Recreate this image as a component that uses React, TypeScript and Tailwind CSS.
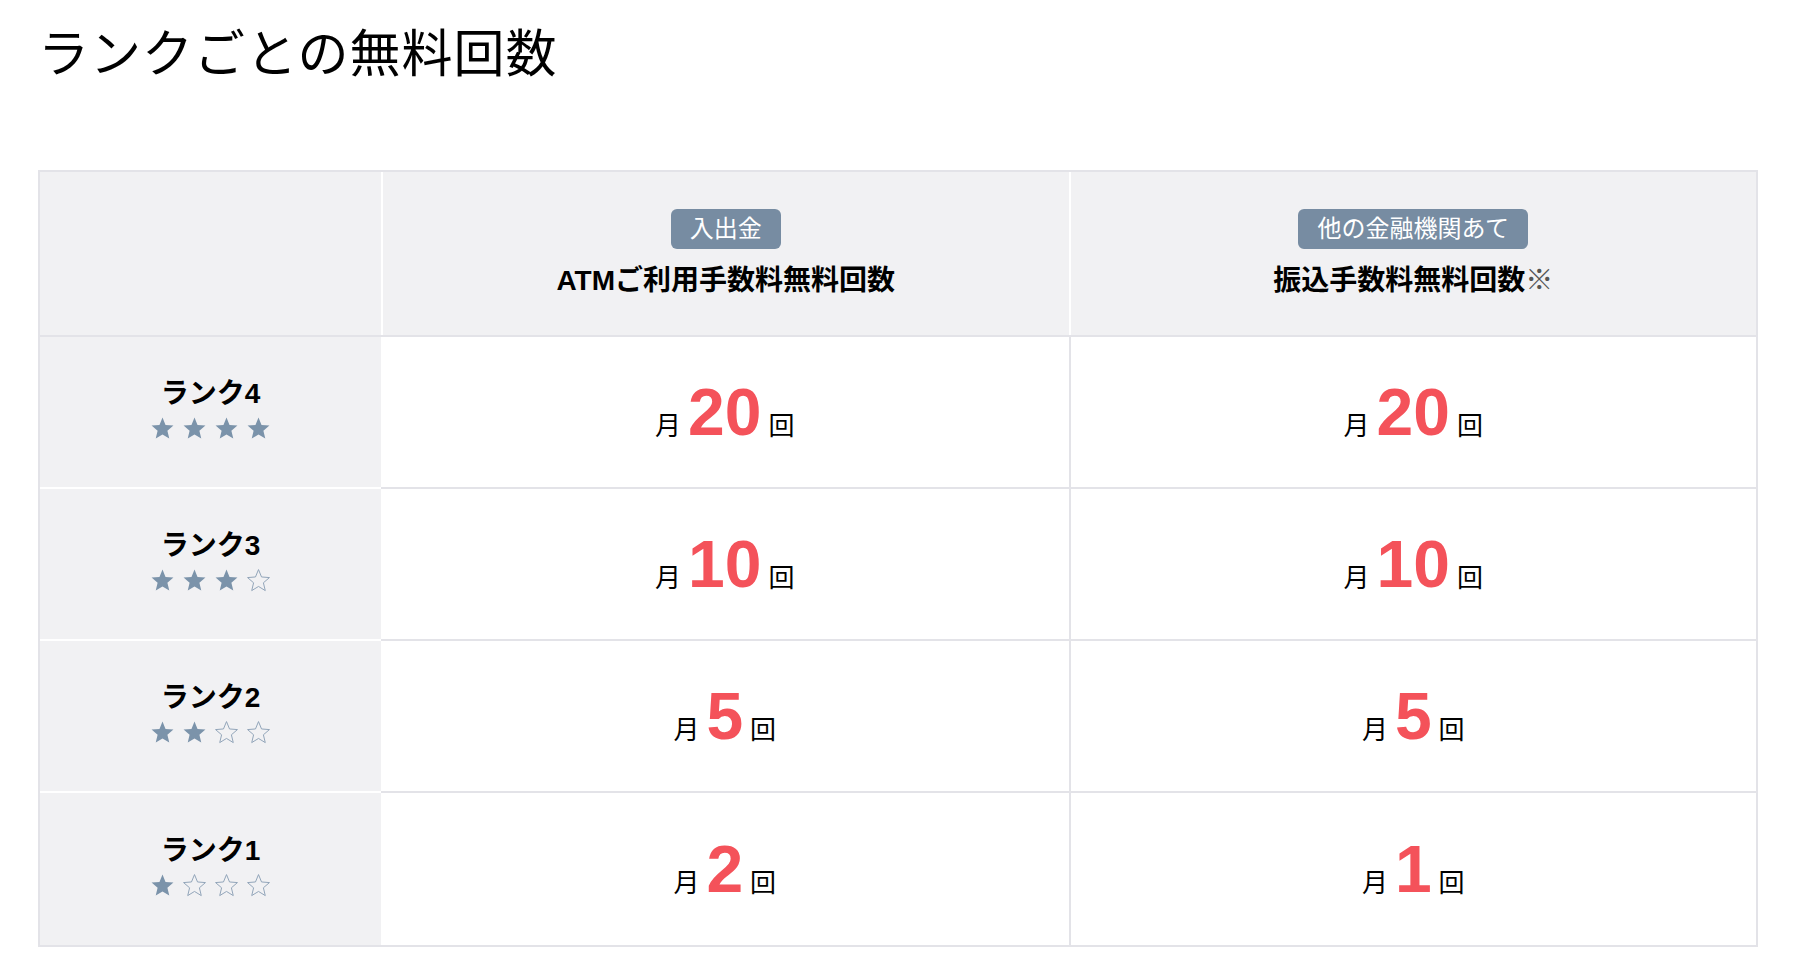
import React from 'react';

type Row = { rank: number; atm: number; transfer: number };

const ROWS: Row[] = [
  { rank: 4, atm: 20, transfer: 20 },
  { rank: 3, atm: 10, transfer: 10 },
  { rank: 2, atm: 5, transfer: 5 },
  { rank: 1, atm: 2, transfer: 1 },
];

const FONT = { fontFamily: '"Liberation Sans", "Noto Sans CJK JP", sans-serif' };

const Star: React.FC<{ filled: boolean }> = ({ filled }) => (
  <svg width="25" height="25" viewBox="0 0 24 24">
    <polygon
      points="12,1.5 14.9,8.6 22.5,9.2 16.7,14.2 18.5,21.7 12,17.7 5.5,21.7 7.3,14.2 1.5,9.2 9.1,8.6"
      fill={filled ? '#7b93aa' : 'none'}
      stroke="#8ba0b5"
      strokeWidth={filled ? 0 : 0.9}
      strokeLinejoin="round"
    />
  </svg>
);

const Count: React.FC<{ n: number }> = ({ n }) => (
  <div className="flex items-baseline justify-center gap-[7px] text-black">
    <span className="text-[26px]">月</span>
    <span className="text-[66px] font-bold leading-none text-[#f4525a]">{n}</span>
    <span className="text-[26px]">回</span>
  </div>
);

const HeadCell: React.FC<{ badge: string; children: React.ReactNode }> = ({ badge, children }) => (
  <div className="flex flex-col items-center justify-center gap-[15px] border-l-2 border-white">
    <span className="rounded-[6px] bg-[#778ca2] px-[19px] py-[4px] text-[24px] leading-[32px] text-white">
      {badge}
    </span>
    <div className="text-[28px] font-bold leading-[34px] text-black">{children}</div>
  </div>
);

export default function App() {
  return (
    <div className="min-h-screen bg-white px-[38px] pt-[20px]" style={FONT}>
      <h1 className="text-[51px] font-normal leading-[70px] tracking-[1px] text-black">
        ランクごとの無料回数
      </h1>

      <div className="mt-[80px] w-[1720px] border-2 border-[#e3e3e8]">
        <div className="grid h-[165px] grid-cols-[341px_1fr_1fr] border-b-2 border-[#e3e3e8] bg-[#f1f1f3]">
          <div />
          <HeadCell badge="入出金">ATMご利用手数料無料回数</HeadCell>
          <HeadCell badge="他の金融機関あて">
            振込手数料無料回数<span className="font-normal text-[#555]">※</span>
          </HeadCell>
        </div>

        {ROWS.map((r, i) => {
          const last = i === ROWS.length - 1;
          return (
            <div key={r.rank} className="grid h-[152px] grid-cols-[341px_1fr_1fr]">
              <div
                className={`flex flex-col items-center justify-center gap-[5px] bg-[#f1f1f3] pb-[6px] ${
                  last ? '' : 'border-b-2 border-white'
                }`}
              >
                <div className="text-[28px] font-bold leading-[34px] text-black">ランク{r.rank}</div>
                <div className="flex gap-[7px]">
                  {[1, 2, 3, 4].map(s => (
                    <Star key={s} filled={s <= r.rank} />
                  ))}
                </div>
              </div>
              <div
                className={`flex items-center justify-center ${last ? '' : 'border-b-2 border-[#e3e3e8]'}`}
              >
                <Count n={r.atm} />
              </div>
              <div
                className={`flex items-center justify-center border-l-2 border-[#e3e3e8] ${
                  last ? '' : 'border-b-2'
                }`}
              >
                <Count n={r.transfer} />
              </div>
            </div>
          );
        })}
      </div>
    </div>
  );
}
